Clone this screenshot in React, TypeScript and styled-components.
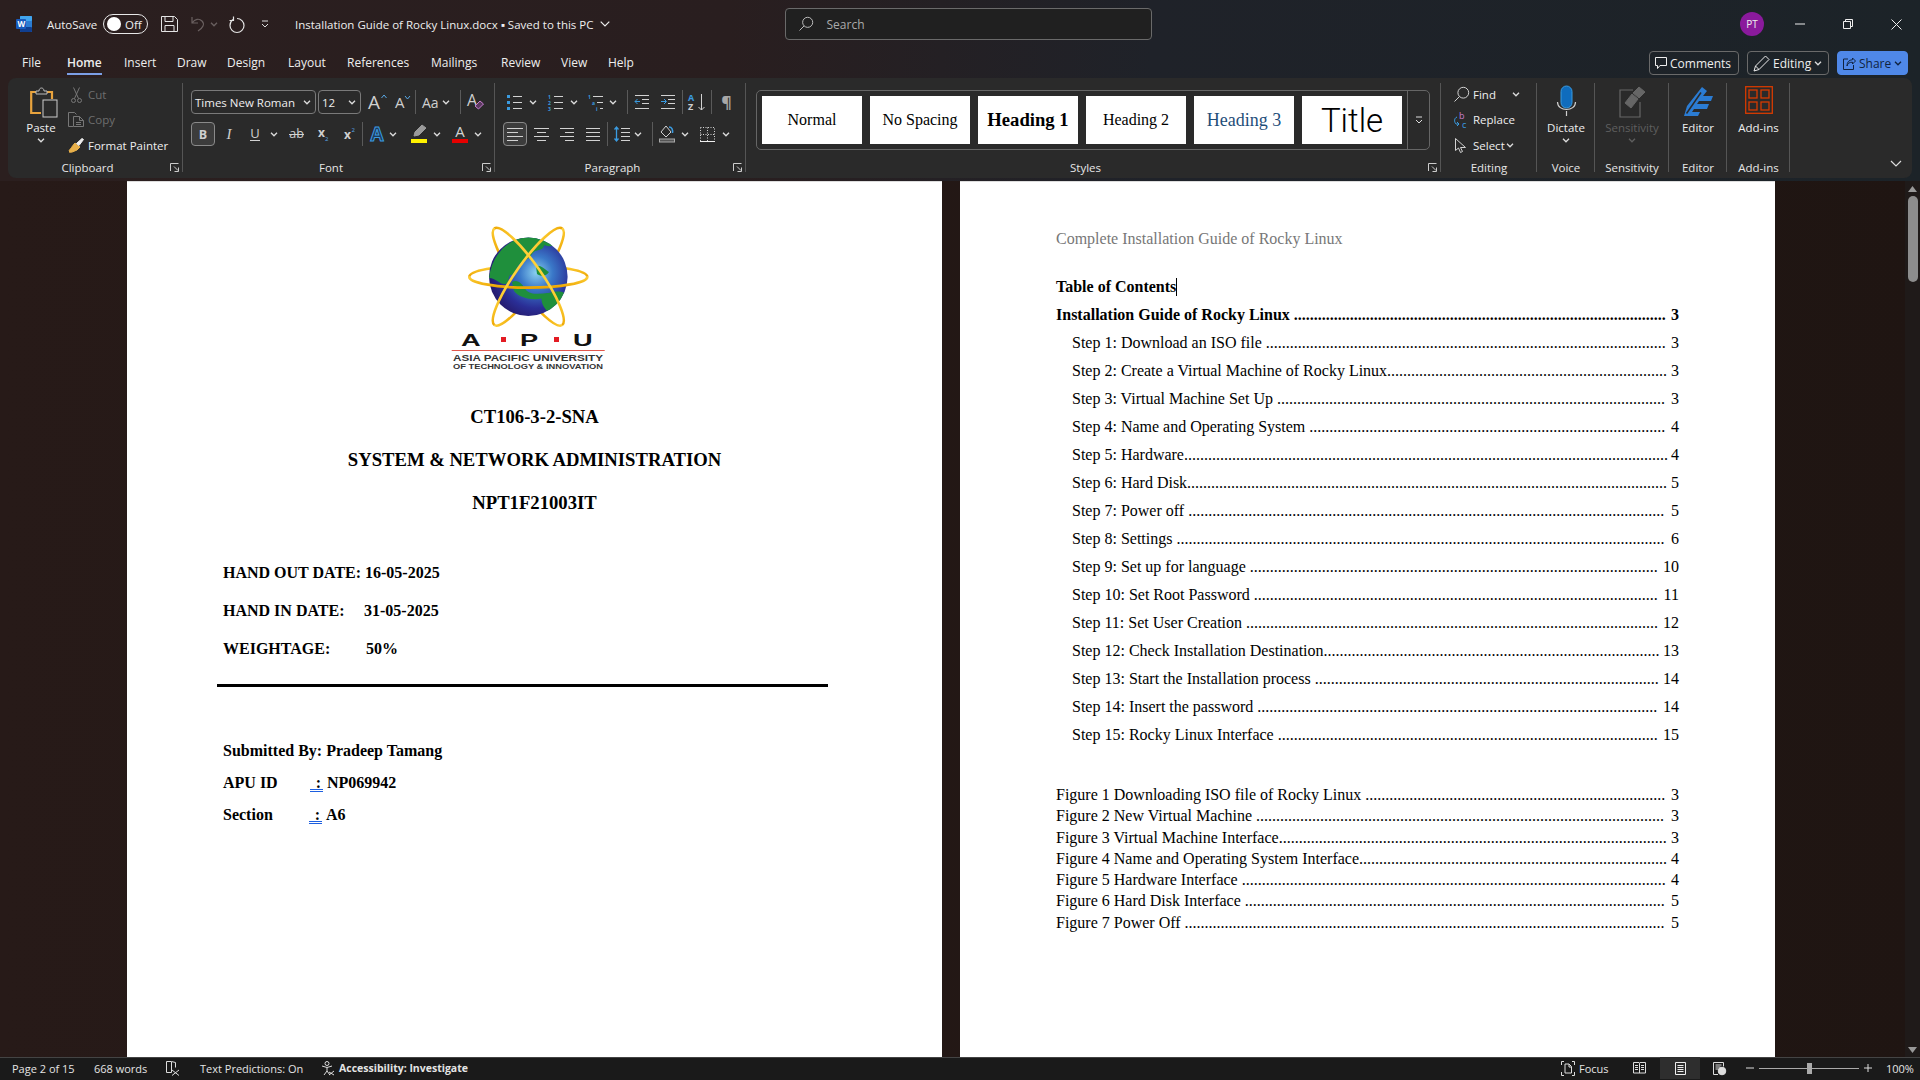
import React, { useLayoutEffect, useRef, useState } from "react";
import styled, { createGlobalStyle } from "styled-components";

const UI = '"Open Sans", "Noto Sans", sans-serif';
const SERIF = '"Liberation Serif", "Times New Roman", serif';

const Global = createGlobalStyle`
  html, body { margin: 0; padding: 0; background: #201513; overflow: hidden; }
  #root { width: 1920px; height: 1080px; }
  * { box-sizing: border-box; }
`;

const Shell = styled.div`
  width: 1920px; height: 1080px; display: flex; flex-direction: column; overflow: hidden;
  font-family: ${UI}; color: #eee; font-size: 11.5px;
  background: #211614;
`;
const Head = styled.header`
  height: 181px; flex-shrink: 0;
  background: linear-gradient(90deg, #2b1f1f 0%, #291e1f 38%, #1f2229 60%, #1c2328 100%);
`;
const TitleBar = styled.div`
  height: 48px; display: grid; grid-template-columns: 784.5px 367px 1fr; align-items: center;
`;
const TitleLeft = styled.div`display: flex; align-items: center; padding-left: 16px;`;
const Cell = styled.span<{ $w: number; $ml?: number; $left?: boolean }>`
  display: flex; align-items: center; justify-content: ${p => (p.$left ? "flex-start" : "center")}; flex-shrink: 0;
  width: ${p => p.$w}px; margin-left: ${p => p.$ml ?? 0}px;
  white-space: nowrap;
`;
const Toggle = styled.span`
  width: 45px; height: 20px; margin-left: 7px; border: 1px solid #e8e8e8; border-radius: 10px;
  display: flex; align-items: center; padding-left: 3px; font-size: 11.5px; gap: 4px; flex-shrink: 0;
`;
const Thumb = styled.i`width: 14px; height: 14px; border-radius: 50%; background: #fff; display: block;`;
const DocName = styled.span`margin-left: 26px; width: 304px; white-space: nowrap; font-size: 11.5px;`;
const SearchBox = styled.div`
  height: 32px; border: 1px solid #6a6a6a; border-radius: 4px; background: #202020;
  display: flex; align-items: center; padding-left: 13px; gap: 14px; color: #aaa; font-size: 12px;
`;
const TitleRight = styled.div`display: flex; justify-content: flex-end; align-items: center;`;
const Avatar = styled.span`
  width: 24px; height: 24px; border-radius: 50%; background: #8a1a9c; color: #eee; font-size: 10px;
  display: flex; align-items: center; justify-content: center; margin-right: 12px;
`;
const WinBtn = styled.span`width: 48px; height: 32px; display: flex; align-items: center; justify-content: center;`;

const TabBar = styled.nav`height: 30px; padding: 3px 12px 0 22px; display: flex; align-items: flex-start;`;
const Tab = styled.span<{ $w: number }>`width: ${p => p.$w}px; height: 24px; flex-shrink: 0; font-size: 12px;`;
const TabText = styled.span<{ $on?: boolean }>`
  display: inline-block; height: 24px; padding-top: 1px; line-height: 22px; white-space: nowrap;
  font-weight: ${p => (p.$on ? 600 : 400)};
  border-bottom: 2px solid ${p => (p.$on ? "#7c9fe6" : "transparent")};
`;
const TabRight = styled.div`margin-left: auto; display: flex; gap: 8px;`;
const TopBtn = styled.span<{ $w: number; $blue?: boolean }>`
  width: ${p => p.$w}px; height: 24px; border-radius: 4px; display: flex; align-items: center; padding-left: 5px; gap: 3px;
  border: 1px solid ${p => (p.$blue ? "#4f88e8" : "#6a6a6a")}; background: ${p => (p.$blue ? "#4f88e8" : "transparent")};
  color: ${p => (p.$blue ? "#10233f" : "#eee")}; font-size: 12px; white-space: nowrap;
`;

const Ribbon = styled.section`
  margin: 0 8px; width: 1904px; height: 100px; background: #2a2a2a; border-radius: 8px; display: flex;
`;
const Group = styled.div<{ $w: number }>`
  position: relative; width: ${p => p.$w}px; height: 100px; flex-shrink: 0; display: flex; flex-direction: column;
  &::after { content: ""; position: absolute; right: 0; top: 5px; bottom: 6px; width: 1px; background: #555; }
`;
const GroupBody = styled.div`height: 80px; display: flex; flex-shrink: 0;`;
const GroupLabel = styled.div<{ $launch?: boolean }>`
  height: 20px; line-height: 20px; text-align: center; font-size: 11.5px; color: #e6e6e6;
  padding-right: ${p => (p.$launch ? 16 : 0)}px; white-space: nowrap;
`;
const Launch = styled.span`position: absolute; right: 4px; bottom: 6px; display: block; line-height: 0;`;
const ToolRows = styled.div`display: flex; flex-direction: column; gap: 8px; padding: 12px 0 0 8px;`;
const ToolRow = styled.div`display: flex; align-items: center; height: 24px;`;
const Divider = styled.span<{ $ml: number }>`width: 1px; height: 24px; background: #5a5a5a; margin-left: ${p => p.$ml}px; flex-shrink: 0;`;
const SelectBox = styled.span<{ $w: number; $ml?: number }>`
  width: ${p => p.$w}px; height: 24px; margin-left: ${p => p.$ml ?? 0}px; border: 1px solid #7a7a7a; border-radius: 4px;
  display: flex; align-items: center; justify-content: space-between; padding: 0 4px 0 3px; font-size: 11.5px; white-space: nowrap; flex-shrink: 0;
`;
const Pressed = styled.span`
  width: 24px; height: 24px; border: 1px solid #8a8a8a; border-radius: 4px; background: #3c3c3c; flex-shrink: 0;
  display: flex; align-items: center; justify-content: center; color: #cfcfcf; font-weight: 700; font-size: 12.5px;
`;
const Big = styled.div<{ $w: number; $c?: string }>`
  width: ${p => p.$w}px; flex-shrink: 0; padding-top: 8px; display: flex; flex-direction: column; align-items: center;
  color: ${p => p.$c ?? "#eee"}; font-size: 11.5px;
`;
const BigIcon = styled.div<{ $shift?: number }>`
  height: 32px; display: flex; align-items: flex-start; justify-content: center; margin-left: ${p => p.$shift ?? 0}px;
`;
const BigText = styled.div`height: 20px; line-height: 20px; white-space: nowrap;`;
const ActionCol = styled.div<{ $ml?: number }>`display: flex; flex-direction: column; padding-top: 4px; margin-left: ${p => p.$ml ?? 0}px;`;
const ActionRow = styled.div<{ $off?: boolean }>`
  display: flex; align-items: center; height: 26px; color: ${p => (p.$off ? "#6e6e6e" : "#eee")}; font-size: 11.5px; white-space: nowrap;
`;
const Gallery = styled.div`
  margin: 12px 0 0 10px; width: 674px; height: 60px; border: 1px solid #666; border-radius: 5px; display: flex; padding-left: 5px; align-items: center;
`;
const StyleCard = styled.div<{ $size: number; $bold?: boolean; $c?: string; $sans?: boolean }>`
  width: 100px; height: 48px; margin-right: 8px; background: #fff; display: flex; align-items: center; justify-content: center; flex-shrink: 0;
  font-family: ${p => (p.$sans ? '"Roboto", sans-serif' : SERIF)}; font-weight: ${p => (p.$bold ? 700 : p.$sans ? 300 : 400)};
  font-size: ${p => p.$size}px; color: ${p => p.$c ?? "#000"}; white-space: nowrap;
`;
const GalleryMore = styled.div`
  margin-left: -3px; flex: 1; height: 58px; border-left: 1px solid #666; display: flex; align-items: center; justify-content: center;
`;
const Collapse = styled.span`margin-left: auto; margin-right: 10px; align-self: flex-end; margin-bottom: 11px; line-height: 0;`;

const Doc = styled.main`flex: 1; min-height: 0; display: flex; padding-left: 127px; background: linear-gradient(90deg, #271a18, #1f1512);`;
const PageOne = styled.article`
  width: 815px; height: 100%; background: #fff; color: #000; flex-shrink: 0; padding-top: 26px;
  font-family: ${SERIF}; border-top: 1px solid #ddd;
`;
const PageTwo = styled(PageOne)`margin-left: 18px; padding: 43px 96px 0;`;
const LogoWrap = styled.div`margin-left: 313px; height: 170px; line-height: 0;`;
const CenterTitle = styled.div`height: 43px; line-height: 43px; text-align: center; font-weight: 700; font-size: 18.67px;`;
const TitleBlock = styled.div`margin-top: 17px;`;
const InfoBlock = styled.div`margin-top: 30px; padding-left: 96px;`;
const InfoLine = styled.div`height: 38px; line-height: 38px; font-weight: 700; font-size: 16px; display: flex;`;
const InfoKey = styled.span<{ $w: number }>`width: ${p => p.$w}px; white-space: nowrap;`;
const Rule = styled.div`margin: 16px 0 0 90px; width: 611px; height: 3px; background: #000;`;
const SubBlock = styled.div`margin-top: 48px; padding-left: 96px;`;
const SubLine = styled.div`height: 32px; line-height: 32px; font-weight: 700; font-size: 16px; display: flex;`;
const SubKey = styled.span<{ $w: number }>`width: ${p => p.$w}px; white-space: nowrap;`;
const Colon = styled.span`
  display: inline-block; width: 13px; height: 20px; line-height: 22px; margin: 5px 4px 0 0; text-align: right; padding-right: 2px;
  border-bottom: 3px double #1d5fe0;
`;
const Running = styled.div`height: 28px; line-height: 28px; font-size: 16px; color: #777;`;
const TocHead = styled.div`margin-top: 20px; height: 28px; line-height: 28px; font-size: 16px; font-weight: 700;`;
const Caret = styled.span`display: inline-block; width: 1px; height: 18px; background: #000; vertical-align: -4px;`;
const TocRow = styled.div<{ $h: number; $indent?: boolean; $bold?: boolean }>`
  display: flex; height: ${p => p.$h}px; line-height: ${p => p.$h}px; font-size: 16px; width: 623px;
  padding-left: ${p => (p.$indent ? 16 : 0)}px; font-weight: ${p => (p.$bold ? 700 : 400)};
`;
const TocTitle = styled.span`white-space: pre; flex-shrink: 0;`;
const Leader = styled.span`flex: 1; white-space: nowrap; min-width: 0; margin-right: 3px;`;
const FigBlock = styled.div`margin-top: 35px;`;
const ScrollCol = styled.aside`
  margin-left: auto; width: 15px; display: flex; flex-direction: column; align-items: center; background: #1f1a19;
`;
const ScrollArrow = styled.span`height: 15px; display: flex; align-items: center; justify-content: center;`;
const ScrollTrack = styled.div`flex: 1;`;
const ScrollThumb = styled.div`width: 10px; height: 86px; background: #8d8d8d; border-radius: 5px;`;

const Status = styled.footer`
  height: 23px; flex-shrink: 0; background: #1a1a1a; border-top: 1px solid #444; display: flex; align-items: center;
  padding: 0 0 2px 12px; font-size: 11px; color: #e4e4e4;
`;
const StatusBold = styled.b`font-size: 10.5px; font-weight: 700;`;
const StatusRight = styled.div`margin-left: auto; padding-right: 8px; display: flex; align-items: center; height: 22px;`;
const ViewActive = styled.span`width: 40px; height: 22px; margin-left: 14px; background: #2e2e2e; display: flex; align-items: center; justify-content: center;`;
const Slider = styled.span`width: 100px; height: 12px; margin-left: 5px; position: relative; display: block;
  &::before { content: ""; position: absolute; left: 0; right: 0; top: 5.5px; height: 1px; background: #aaa; }
`;
const SliderThumb = styled.i`position: absolute; left: 48px; top: 1px; width: 5px; height: 11px; background: #aaa; display: block;`;

const IconSvg = styled.svg`display: block; flex-shrink: 0; overflow: visible;`;
type SP = { w: number; h: number; children: React.ReactNode; c?: string; sw?: number };
const S = ({ w, h, children, c = "#d2d2d2", sw = 1 }: SP) => (
  <IconSvg width={w} height={h} viewBox={`0 0 ${w} ${h}`} fill="none" stroke={c} strokeWidth={sw}>{children}</IconSvg>
);
const Chev = ({ c = "#ddd" }: { c?: string }) => <S w={8} h={5} c={c} sw={1.3}><path d="M1 .8l3 3 3-3" /></S>;
const LaunchIcon = () => <S w={9} h={9} c="#ccc"><path d="M.5 8V.5H8.5M4 3.500l4 4M8.500 4.500v4h-4" /></S>;
const T = (p: React.SVGProps<SVGTextElement>) => <text stroke="none" fontFamily={UI} {...p} />;
const Lines = ({ w, h, rows, c }: { w: number; h: number; rows: [number, number, number][]; c?: string }) => (
  <S w={w} h={h} c={c}>{rows.map(([x1, x2, y], i) => <path key={i} d={`M${x1} ${y + .5}H${x2}`} />)}</S>
);

const WordIcon = () => (
  <S w={16} h={16} c="none">
    <rect x="4" y="0" width="12" height="16" rx="1" fill="#2b7cd3" />
    <rect x="4" y="0" width="12" height="5" rx="1" fill="#41a5ee" />
    <rect x="4" y="11" width="12" height="5" rx="1" fill="#103f91" />
    <rect x="0" y="3" width="10" height="10" rx="1" fill="#185abd" />
    <T x="1.500" y="11" fontSize="8" fontWeight="700" fill="#fff">W</T>
  </S>
);
const SaveIcon = () => <S w={17} h={16} c="#e4e4e4"><path d="M.5.5h13l3 3v12H.5zM4 .5v5h8v-5M4 15.500v-6h9v6" /></S>;
const UndoIcon = () => <S w={14} h={16} c="#6a6060" sw={1.2}><path d="M1 1v6h6M1 7c3-4 7-5 10-2 3 3 1 7-4 10" /></S>;
const RedoIcon = () => <S w={16} h={17} c="#e4e4e4" sw={1.2}><path d="M8 2.500a7 7 0 1 1-7 7c0-3 1.500-5 3-6M4.500 .5v4h-4" /></S>;
const QatIcon = () => <S w={8} h={8} c="#ddd"><path d="M1 1h6M1 4l3 3 3-3" /></S>;
const SearchIcon = ({ c = "#bbb", w = 14 }: { c?: string; w?: number }) => (
  <S w={w} h={w} c={c}><circle cx={w * .62} cy={w * .38} r={w * .36} /><path d={`M${w * .36} ${w * .64}L.5 ${w - .5}`} /></S>
);
const CommentIcon = () => <S w={12} h={12} c="#eee"><path d="M.5.5h11v8H5l-2.500 3V8.500H.5z" /></S>;
const PenIcon = ({ c = "#eee" }: { c?: string }) => <S w={17} h={17} c={c}><path d="M1 16l1.500-5L12.500 1l3.500 3.500-10 10zM2.500 11l3.500 3.500" /></S>;
const ShareIcon = () => <S w={13} h={13} c="#10233f"><path d="M9.500 1l3 3-3 3V5.200C6 5 4.500 7 4 9c0-4 2-6 5.500-6.300zM5 2H.5v10.500h10V8" /></S>;

const PasteIcon = () => (
  <S w={27} h={31}>
    <path d="M6 6H1.200v21H11" stroke="#e8a33d" strokeWidth="2.200" />
    <path d="M17 6h5v7" stroke="#e8a33d" strokeWidth="2.200" />
    <path d="M6 8V5h3c0-4 5-4 5 0h3v3z" stroke="#bbb" />
    <rect x="13" y="14" width="14" height="17" fill="#2a2a2a" stroke="#ccc" />
  </S>
);
const CutIcon = () => <S w={11} h={16} c="#777"><circle cx="2.500" cy="13.500" r="2" /><circle cx="8.500" cy="13.500" r="2" /><path d="M3.500 11.500L8.500.5M7.500 11.500L2.500.5" /></S>;
const CopyIcon = () => <S w={16} h={15} c="#777"><path d="M5 14.500H.5V.5h6l2 2M5.500 4.500h6l4 4v6h-10zM11.500 4.500v4h4M8 10.500h5M8 12.500h5" /></S>;
const PainterIcon = () => (
  <S w={16} h={15}>
    <path d="M7 5l5 4-3 3c-3 1-5 3-8 2l2-2-2 .5C3 11 4 8 7 5z" fill="#e8b04a" stroke="#e8b04a" />
    <path d="M8.500 5.500L14 .5 15.500 1.500 11 7.500z" fill="#eee" stroke="#eee" />
  </S>
);
const GrowIcon = () => <S w={20} h={24}><T x="0" y="19" fontSize="19" fill="#cfcfcf">A</T><path d="M13.500 8l2.500-3 2.500 3" stroke="#5aa9e6" /></S>;
const ShrinkIcon = () => <S w={15} h={24}><T x="0" y="18" fontSize="15" fill="#cfcfcf">A</T><path d="M10 6l2.500 3 2.500-3" stroke="#5aa9e6" /></S>;
const AaIcon = () => <S w={17} h={24}><T x="0" y="17.500" fontSize="14" fill="#cfcfcf">Aa</T></S>;
const ClearIcon = () => (
  <S w={17} h={20}>
    <T x="0" y="14" fontSize="16" fill="#cfcfcf">A</T>
    <path d="M8 14l5-5 3.500 3-5 5z" stroke="#c77dd1" fill="#5b3a60" />
  </S>
);
const Letter = ({ t, st, w = 12 }: { t: string; st?: React.SVGProps<SVGTextElement>; w?: number }) => (
  <S w={w} h={18}><T x={w / 2} y="14" textAnchor="middle" fontSize="13" fill="#cfcfcf" {...st}>{t}</T></S>
);
const UnderlineIcon = () => <S w={10} h={18}><T x="5" y="13" textAnchor="middle" fontSize="13" fill="#cfcfcf">U</T><path d="M0 15.500h10" /></S>;
const StrikeIcon = () => <S w={15} h={18}><T x="7.500" y="13" textAnchor="middle" fontSize="12.500" fill="#cfcfcf">ab</T><path d="M0 9.500h15" /></S>;
const SubIcon = () => <S w={10} h={18}><T x="0" y="12" fontSize="12" fontWeight="700" fill="#cfcfcf">x</T><T x="7" y="16" fontSize="6" fill="#5aa9e6">2</T></S>;
const SupIcon = () => <S w={11} h={18}><T x="0" y="14" fontSize="12" fontWeight="700" fill="#cfcfcf">x</T><T x="7.500" y="7" fontSize="6" fill="#5aa9e6">2</T></S>;
const EffectA = () => <S w={16} h={18}><T x="8" y="15.500" textAnchor="middle" fontSize="19" fontWeight="700" fill="#1d3a5c" stroke="#3a9be0" strokeWidth="1">A</T></S>;
const HighIcon = () => (
  <S w={16} h={20}>
    <path d="M3 12l1-4 7-7 4 3-7 7z" fill="#9a9a9a" stroke="#9a9a9a" />
    <rect x="0" y="15" width="16" height="4" fill="#fff200" stroke="none" />
  </S>
);
const FontColor = () => (
  <S w={16} h={20}>
    <T x="8" y="13" textAnchor="middle" fontSize="15" fill="#d2d2d2">A</T>
    <rect x="0" y="15" width="16" height="4" fill="#e60000" stroke="none" />
  </S>
);
const BulletIcon = () => (
  <S w={15} h={16}>
    <path d="M6 2.500h9M6 8.500h9M6 14.500h9" />
    <rect x="0" y="1" width="3" height="3" fill="#3a9be0" stroke="none" /><rect x="0" y="7" width="3" height="3" fill="#3a9be0" stroke="none" /><rect x="0" y="13" width="3" height="3" fill="#3a9be0" stroke="none" />
  </S>
);
const NumberIcon = () => (
  <S w={15} h={16}>
    <path d="M6 2.500h9M6 8.500h9M6 14.500h9" />
    <T x="0" y="4.500" fontSize="5" fontWeight="700" fill="#3a9be0">1</T><T x="0" y="10.500" fontSize="5" fontWeight="700" fill="#3a9be0">2</T><T x="0" y="16.500" fontSize="5" fontWeight="700" fill="#3a9be0">3</T>
  </S>
);
const MultiIcon = () => (
  <S w={16} h={16}>
    <path d="M5 2.500h10M9 8.500h6M12 14.500h3" />
    <T x="0" y="5" fontSize="5" fontWeight="700" fill="#3a9be0">1</T><T x="4" y="11" fontSize="5" fontWeight="700" fill="#3a9be0">a</T><T x="8" y="16.500" fontSize="5" fontWeight="700" fill="#3a9be0">i</T>
  </S>
);
const IndentIcon = ({ flip }: { flip?: boolean }) => (
  <S w={14} h={14}>
    <path d="M0 .5h14M7 4.500h7M7 8.500h7M0 13.500h14" />
    {flip
      ? <path d="M5 6.500H0M2.500 4L0 6.500 2.500 9" stroke="#3a9be0" />
      : <path d="M0 6.500h5M3 4l2.500 2.500L3 9" stroke="#3a9be0" />}
  </S>
);
const SortIcon = () => (
  <S w={18} h={18}>
    <T x="0" y="8" fontSize="9" fontWeight="700" fill="#3a9be0">A</T>
    <T x="0" y="17" fontSize="9" fontWeight="700" fill="#cfcfcf">Z</T>
    <path d="M13.500 1v16M10.500 14l3 3 3-3" />
  </S>
);
const Pilcrow = () => <S w={11} h={18}><T x="5.500" y="15" textAnchor="middle" fontSize="16" fontWeight="700" fill="#a8a8a8">¶</T></S>;
const SpacingIcon = () => (
  <S w={16} h={16}>
    <path d="M7 2.500h9M7 6.500h9M7 10.500h9M7 14.500h9" />
    <path d="M2.500 1v14M.5 3.500l2-2.500 2 2.500M.5 12.500l2 2.500 2-2.500" stroke="#3a9be0" strokeWidth="1.300" />
  </S>
);
const ShadeIcon = () => (
  <S w={16} h={18}>
    <path d="M7 1l-5 6 5 5 5-5z" />
    <path d="M10 2c3 0 4 3 3.500 6" stroke="#3a9be0" strokeWidth="1.500" />
    <rect x=".5" y="14" width="15" height="3" fill="#555" stroke="#aaa" />
  </S>
);
const BorderIcon = () => (
  <S w={15} h={15}>
    <path d="M.5.500h14v14M.5.500v14M7.500.500v14M.5 7.500h14" strokeDasharray="1 1.500" />
    <path d="M0 14.500h15" stroke="#eee" />
  </S>
);
const ReplaceIcon = () => (
  <S w={15} h={16}>
    <path d="M4 5C1 6 1 10 3 12h3M4 14l2-2-2-2" stroke="#3a9be0" />
    <T x="6" y="7" fontSize="9" fill="#c77dd1">b</T>
    <T x="9" y="15.500" fontSize="9" fill="#3a9be0">c</T>
  </S>
);
const SelectIcon = () => <S w={12} h={15}><path d="M.5.500v12l3-2.500 2 4.500 2-1-2-4h5z" /></S>;
const MicIcon = () => (
  <S w={20} h={30} c="#cfcfcf">
    <rect x="5" y="0" width="11" height="22" rx="5.500" fill="#0f6cbd" stroke="#3a9be0" />
    <path d="M1.500 16c0 10 18 10 18 0M10.500 25v5" strokeWidth="1.200" />
  </S>
);
const SensIcon = () => (
  <S w={27} h={30} c="#666">
    <path d="M14 4H1v27h20V16" strokeWidth="1.200" />
    <path d="M6 17l7-9 6 5-7 9z" fill="#666" />
    <path d="M14 7l6-6 6 5-6 6z" fill="#666" />
  </S>
);
const EditorIcon = () => (
  <S w={31} h={31} c="#2b7cd3">
    <path d="M1 30l3-10L19 1l5 4-4 5h10l-2 5H16l-2 3h12l-2 5H11l-2 3h8l-2 4H6z" fill="#2b7cd3" stroke="none" />
    <path d="M3.500 27.500L18 6.500" stroke="#2a2a2a" strokeWidth="1.500" />
  </S>
);
const AddinsIcon = () => (
  <S w={28} h={28} c="#d83b01" sw={1.300}>
    <rect x=".7" y=".7" width="26.600" height="26.600" />
    <rect x="4" y="4" width="8" height="8" /><rect x="16" y="4" width="8" height="8" />
    <rect x="4" y="16" width="8" height="8" /><rect x="16" y="16" width="8" height="8" />
  </S>
);

const Ring = ({ r, front }: { r: number; front?: boolean }) => {
  const d = front ? "M-59 0A59 13 0 0 1 59 0" : "M-59 0A59 13 0 1 0 59 0";
  return <path d={d} transform={`translate(88.300 68.700) rotate(${r})`} stroke="url(#gold)" strokeWidth="2.600" fill="none" />;
};
const Logo = () => (
  <IconSvg width={180} height={170} viewBox="0 0 180 170">
    <defs>
      <radialGradient id="glb" cx="60%" cy="45%" r="60%">
        <stop offset="0" stopColor="#8ad0f0" /><stop offset=".35" stopColor="#3a78c8" /><stop offset=".75" stopColor="#2a2e96" /><stop offset="1" stopColor="#261c70" />
      </radialGradient>
      <linearGradient id="gold" x1="0" y1="0" x2="0" y2="1"><stop offset="0" stopColor="#ffd23a" /><stop offset="1" stopColor="#eda500" /></linearGradient>
      <clipPath id="gc"><circle cx="88.300" cy="68.700" r="39.300" /></clipPath>
    </defs>
    <path d="M29.300 68.700A59 11 0 0 1 147.300 68.700" stroke="url(#gold)" strokeWidth="2.600" fill="none" />
    <Ring r={55} /><Ring r={-55} />
    <circle cx="88.300" cy="68.700" r="39.300" fill="url(#glb)" />
    <g clipPath="url(#gc)" fill="#1f8f3c">
      <path d="M49 70C52 45 70 28 92 29c8 1 14 5 12 9-2 6-8 2-12 8-4 7-10 6-14 12-3 4-1 9-8 9-3 4 0 10-6 9-5 0-8-6-15-6z" />
      <path d="M72 74c6-3 10 2 14 8 4 5 14 4 22 3 2 3-4 6-10 6-8 1-20-2-24-8z" />
      <path d="M102 88c6-4 18-6 22-3-2 10-8 18-14 20-6-3-10-12-8-17z" />
      <path d="M96 58c5-1 8 3 13 6-2 4-8 5-12 2z" />
      <path d="M100 33c6-2 12 0 14 4-4 2-10 2-14-4z" />
    </g>
    <path d="M29.300 68.700A59 11 0 0 0 147.300 68.700" stroke="url(#gold)" strokeWidth="2.800" fill="none" />
    <Ring r={55} front /><Ring r={-55} front />
    <g stroke="none" fontFamily={'"Liberation Sans", sans-serif'} fontWeight="700" fontSize="16.500" fill="#111">
      <text transform="translate(21 138) scale(1.650 1)">A</text>
      <text transform="translate(80 138) scale(1.650 1)">P</text>
      <text transform="translate(133 138) scale(1.650 1)">U</text>
    </g>
    <rect x="61" y="129" width="5" height="5" fill="#e31b23" /><rect x="114" y="129" width="5" height="5" fill="#e31b23" />
    <rect x="11.700" y="142" width="153" height="1" fill="#e2574c" />
    <text x="13" y="153" fontFamily={'"Liberation Sans", sans-serif'} fontWeight="700" fontSize="8.600" textLength="150" lengthAdjust="spacingAndGlyphs" fill="#333">ASIA PACIFIC UNIVERSITY</text>
    <text x="13" y="160.500" fontFamily={'"Liberation Sans", sans-serif'} fontWeight="700" fontSize="6.500" textLength="150" lengthAdjust="spacingAndGlyphs" fill="#333">OF TECHNOLOGY &amp; INNOVATION</text>
  </IconSvg>
);

const TABS: [string, number][] = [["File", 45], ["Home", 57], ["Insert", 53], ["Draw", 50], ["Design", 61], ["Layout", 59], ["References", 84], ["Mailings", 70], ["Review", 60], ["View", 47], ["Help", 40]];
const STEPS: [string, string][] = [
  ["Step 1: Download an ISO file ", "3"], ["Step 2: Create a Virtual Machine of Rocky Linux", "3"], ["Step 3: Virtual Machine Set Up ", "3"],
  ["Step 4: Name and Operating System ", "4"], ["Step 5: Hardware", "4"], ["Step 6: Hard Disk", "5"], ["Step 7: Power off ", "5"], ["Step 8: Settings ", "6"],
  ["Step 9: Set up for language ", "10"], ["Step 10: Set Root Password ", "11"], ["Step 11: Set User Creation ", "12"], ["Step 12: Check Installation Destination", "13"],
  ["Step 13: Start the Installation process ", "14"], ["Step 14: Insert the password ", "14"], ["Step 15: Rocky Linux Interface ", "15"],
];
const FIGS: [string, string][] = [
  ["Figure 1 Downloading ISO file of Rocky Linux ", "3"], ["Figure 2 New Virtual Machine ", "3"], ["Figure 3 Virtual Machine Interface", "3"],
  ["Figure 4 Name and Operating System Interface", "4"], ["Figure 5 Hardware Interface ", "4"], ["Figure 6 Hard Disk Interface ", "5"], ["Figure 7 Power Off ", "5"],
];
// A dot of the 16px serif is 4px wide: fill the leader with as many as fit.
const Toc = ({ t, n, h, indent, bold }: { t: string; n: string; h: number; indent?: boolean; bold?: boolean }) => {
  const ref = useRef<HTMLSpanElement>(null);
  const [dots, setDots] = useState(0);
  useLayoutEffect(() => {
    if (ref.current) setDots(Math.floor(ref.current.getBoundingClientRect().width / 4));
  }, []);
  return (
    <TocRow $h={h} $indent={indent} $bold={bold}>
      <TocTitle>{t}</TocTitle><Leader ref={ref}>{".".repeat(dots)}</Leader><span>{n}</span>
    </TocRow>
  );
};
const ALIGN = {
  left: [[0, 16, 1], [0, 11, 5], [0, 16, 9], [0, 11, 13]],
  center: [[0, 15, 1], [3, 12, 5], [0, 15, 9], [3, 12, 13]],
  right: [[0, 14, 1], [5, 14, 5], [0, 14, 9], [5, 14, 13]],
  just: [[0, 14, 1], [0, 14, 5], [0, 14, 9], [0, 14, 13]],
} as Record<string, [number, number, number][]>;

export default function App() {
  return (
    <Shell>
      <Global />
      <Head>
        <TitleBar>
          <TitleLeft>
            <WordIcon />
            <Cell $w={48} $ml={16}>AutoSave</Cell>
            <Toggle><Thumb />Off</Toggle>
            <Cell $w={17} $ml={13}><SaveIcon /></Cell>
            <Cell $w={14} $ml={13}><UndoIcon /></Cell>
            <Cell $w={8} $ml={5}><Chev c="#6a6060" /></Cell>
            <Cell $w={16} $ml={11}><RedoIcon /></Cell>
            <Cell $w={8} $ml={16}><QatIcon /></Cell>
            <DocName>Installation Guide of Rocky Linux.docx ▪ Saved to this PC</DocName>
            <Cell $w={10} $ml={1}><S w={10} h={6} c="#eee" sw={1.200}><path d="M.7.7L5 5 9.300.7" /></S></Cell>
          </TitleLeft>
          <SearchBox><SearchIcon />Search</SearchBox>
          <TitleRight>
            <Avatar>PT</Avatar>
            <WinBtn><S w={10} h={2} c="#eee"><path d="M0 1h10" /></S></WinBtn>
            <WinBtn><S w={10} h={10} c="#eee"><path d="M2.500 2V.5h7v7H8M.5 2.500h7v7h-7z" /></S></WinBtn>
            <WinBtn><S w={11} h={11} c="#eee"><path d="M.5.5l10 10M10.500.5l-10 10" /></S></WinBtn>
          </TitleRight>
        </TitleBar>
        <TabBar>
          {TABS.map(([t, w]) => <Tab key={t} $w={w}><TabText $on={t === "Home"}>{t}</TabText></Tab>)}
          <TabRight>
            <TopBtn $w={90}><CommentIcon />Comments</TopBtn>
            <TopBtn $w={82}><PenIcon />Editing<Chev /></TopBtn>
            <TopBtn $w={71} $blue><ShareIcon />Share<Chev c="#10233f" /></TopBtn>
          </TabRight>
        </TabBar>
        <Ribbon>
          <Group $w={175}>
            <GroupBody>
              <Big $w={66}>
                <BigIcon $shift={5}><PasteIcon /></BigIcon>
                <BigText>Paste</BigText>
                <Chev />
              </Big>
              <ActionCol $ml={-6}>
                <ActionRow $off><Cell $w={16}><CutIcon /></Cell><Cell $left $w={30} $ml={4}>Cut</Cell></ActionRow>
                <ActionRow $off><Cell $w={16}><CopyIcon /></Cell><Cell $left $w={32} $ml={4}>Copy</Cell></ActionRow>
                <ActionRow><Cell $w={16}><PainterIcon /></Cell><Cell $left $w={78} $ml={4}>Format Painter</Cell></ActionRow>
              </ActionCol>
            </GroupBody>
            <GroupLabel $launch>Clipboard</GroupLabel>
            <Launch><LaunchIcon /></Launch>
          </Group>
          <Group $w={312}>
            <GroupBody>
              <ToolRows>
                <ToolRow>
                  <SelectBox $w={125}>Times New Roman<Chev /></SelectBox>
                  <SelectBox $w={43} $ml={2}>12<Chev /></SelectBox>
                  <Cell $w={20} $ml={7}><GrowIcon /></Cell>
                  <Cell $w={15} $ml={7}><ShrinkIcon /></Cell>
                  <Divider $ml={5} />
                  <Cell $w={16} $ml={6}><AaIcon /></Cell>
                  <Cell $w={8} $ml={4}><Chev /></Cell>
                  <Divider $ml={10} />
                  <Cell $w={16} $ml={6}><ClearIcon /></Cell>
                </ToolRow>
                <ToolRow>
                  <Pressed>B</Pressed>
                  <Cell $w={10} $ml={9}><Letter t="I" w={10} st={{ fontStyle: "italic", fontFamily: SERIF, fontSize: 15 }} /></Cell>
                  <Cell $w={10} $ml={16}><UnderlineIcon /></Cell>
                  <Cell $w={8} $ml={10}><Chev /></Cell>
                  <Cell $w={15} $ml={11}><StrikeIcon /></Cell>
                  <Cell $w={10} $ml={14}><SubIcon /></Cell>
                  <Cell $w={11} $ml={16}><SupIcon /></Cell>
                  <Divider $ml={7} />
                  <Cell $w={16} $ml={6}><EffectA /></Cell>
                  <Cell $w={8} $ml={4}><Chev /></Cell>
                  <Cell $w={16} $ml={14}><HighIcon /></Cell>
                  <Cell $w={8} $ml={6}><Chev /></Cell>
                  <Cell $w={16} $ml={11}><FontColor /></Cell>
                  <Cell $w={8} $ml={6}><Chev /></Cell>
                </ToolRow>
              </ToolRows>
            </GroupBody>
            <GroupLabel $launch>Font</GroupLabel>
            <Launch><LaunchIcon /></Launch>
          </Group>
          <Group $w={251}>
            <GroupBody>
              <ToolRows>
                <ToolRow>
                  <Cell $w={15} $ml={4}><BulletIcon /></Cell>
                  <Cell $w={8} $ml={7}><Chev /></Cell>
                  <Cell $w={15} $ml={11}><NumberIcon /></Cell>
                  <Cell $w={8} $ml={7}><Chev /></Cell>
                  <Cell $w={16} $ml={10}><MultiIcon /></Cell>
                  <Cell $w={8} $ml={5}><Chev /></Cell>
                  <Divider $ml={10} />
                  <Cell $w={14} $ml={7}><IndentIcon flip /></Cell>
                  <Cell $w={14} $ml={12}><IndentIcon /></Cell>
                  <Divider $ml={7} />
                  <Cell $w={18} $ml={5}><SortIcon /></Cell>
                  <Divider $ml={5} />
                  <Cell $w={11} $ml={9}><Pilcrow /></Cell>
                </ToolRow>
                <ToolRow>
                  <Pressed><Lines w={16} h={14} rows={ALIGN.left} /></Pressed>
                  <Cell $w={15} $ml={7}><Lines w={15} h={14} rows={ALIGN.center} /></Cell>
                  <Cell $w={14} $ml={11}><Lines w={14} h={14} rows={ALIGN.right} /></Cell>
                  <Cell $w={14} $ml={12}><Lines w={14} h={14} rows={ALIGN.just} /></Cell>
                  <Divider $ml={7} />
                  <Cell $w={16} $ml={6}><SpacingIcon /></Cell>
                  <Cell $w={8} $ml={4}><Chev /></Cell>
                  <Divider $ml={10} />
                  <Cell $w={16} $ml={6}><ShadeIcon /></Cell>
                  <Cell $w={8} $ml={6}><Chev /></Cell>
                  <Cell $w={15} $ml={11}><BorderIcon /></Cell>
                  <Cell $w={8} $ml={7}><Chev /></Cell>
                </ToolRow>
              </ToolRows>
            </GroupBody>
            <GroupLabel $launch>Paragraph</GroupLabel>
            <Launch><LaunchIcon /></Launch>
          </Group>
          <Group $w={695}>
            <GroupBody>
              <Gallery>
                <StyleCard $size={16}>Normal</StyleCard>
                <StyleCard $size={16}>No Spacing</StyleCard>
                <StyleCard $size={18.67} $bold>Heading 1</StyleCard>
                <StyleCard $size={16}>Heading 2</StyleCard>
                <StyleCard $size={18} $c="#1f4e79">Heading 3</StyleCard>
                <StyleCard $size={33} $sans>Title</StyleCard>
                <GalleryMore><QatIcon /></GalleryMore>
              </Gallery>
            </GroupBody>
            <GroupLabel $launch>Styles</GroupLabel>
            <Launch><LaunchIcon /></Launch>
          </Group>
          <Group $w={96}>
            <GroupBody>
              <ActionCol>
                <ActionRow><Cell $w={15} $ml={13}><SearchIcon c="#d2d2d2" w={15} /></Cell><Cell $left $w={28} $ml={4}>Find</Cell><Cell $w={8} $ml={11}><Chev /></Cell></ActionRow>
                <ActionRow><Cell $w={15} $ml={12}><ReplaceIcon /></Cell><Cell $left $w={44} $ml={5}>Replace</Cell></ActionRow>
                <ActionRow><Cell $w={12} $ml={14}><SelectIcon /></Cell><Cell $left $w={33} $ml={6}>Select</Cell><Cell $w={8}><Chev /></Cell></ActionRow>
              </ActionCol>
            </GroupBody>
            <GroupLabel>Editing</GroupLabel>
          </Group>
          <Group $w={58}>
            <GroupBody>
              <Big $w={58}><BigIcon><MicIcon /></BigIcon><BigText>Dictate</BigText><Chev /></Big>
            </GroupBody>
            <GroupLabel>Voice</GroupLabel>
          </Group>
          <Group $w={74}>
            <GroupBody>
              <Big $w={74} $c="#5f5f5f"><BigIcon><SensIcon /></BigIcon><BigText>Sensitivity</BigText><Chev c="#5f5f5f" /></Big>
            </GroupBody>
            <GroupLabel>Sensitivity</GroupLabel>
          </Group>
          <Group $w={58}>
            <GroupBody>
              <Big $w={58}><BigIcon><EditorIcon /></BigIcon><BigText>Editor</BigText></Big>
            </GroupBody>
            <GroupLabel>Editor</GroupLabel>
          </Group>
          <Group $w={63}>
            <GroupBody>
              <Big $w={63}><BigIcon><AddinsIcon /></BigIcon><BigText>Add-ins</BigText></Big>
            </GroupBody>
            <GroupLabel>Add-ins</GroupLabel>
          </Group>
          <Collapse><S w={12} h={7} c="#ddd" sw={1.200}><path d="M1 1l5 5 5-5" /></S></Collapse>
        </Ribbon>
      </Head>
      <Doc>
        <PageOne>
          <LogoWrap><Logo /></LogoWrap>
          <TitleBlock>
            <CenterTitle>CT106-3-2-SNA</CenterTitle>
            <CenterTitle>SYSTEM &amp; NETWORK ADMINISTRATION</CenterTitle>
            <CenterTitle>NPT1F21003IT</CenterTitle>
          </TitleBlock>
          <InfoBlock>
            <InfoLine><InfoKey $w={142}>HAND OUT DATE:</InfoKey>16-05-2025</InfoLine>
            <InfoLine><InfoKey $w={141}>HAND IN DATE:</InfoKey>31-05-2025</InfoLine>
            <InfoLine><InfoKey $w={143}>WEIGHTAGE:</InfoKey>50%</InfoLine>
          </InfoBlock>
          <Rule />
          <SubBlock>
            <SubLine>Submitted By: Pradeep Tamang</SubLine>
            <SubLine><SubKey $w={87}>APU ID</SubKey><Colon>:</Colon>NP069942</SubLine>
            <SubLine><SubKey $w={86}>Section</SubKey><Colon>:</Colon>A6</SubLine>
          </SubBlock>
        </PageOne>
        <PageTwo>
          <Running>Complete Installation Guide of Rocky Linux</Running>
          <TocHead>Table of Contents<Caret /></TocHead>
          <Toc t="Installation Guide of Rocky Linux " n="3" h={28} bold />
          {STEPS.map(([t, n]) => <Toc key={t} t={t} n={n} h={28} indent />)}
          <FigBlock>
            {FIGS.map(([t, n]) => <Toc key={t} t={t} n={n} h={21.3} />)}
          </FigBlock>
        </PageTwo>
        <ScrollCol>
          <ScrollArrow><S w={9} h={6} c="none"><path d="M4.500 0L9 6H0z" fill="#999" /></S></ScrollArrow>
          <ScrollTrack><ScrollThumb /></ScrollTrack>
          <ScrollArrow><S w={9} h={6} c="none"><path d="M4.500 6L9 0H0z" fill="#999" /></S></ScrollArrow>
        </ScrollCol>
      </Doc>
      <Status>
        <Cell $left $w={63}>Page 2 of 15</Cell>
        <Cell $left $w={53} $ml={19}>668 words</Cell>
        <Cell $w={14} $ml={19}><S w={14} h={15} c="#ddd"><path d="M5 .5H.5v11h5V.5l4 1v5M6 9l7 5.500M13 9l-7 5.500" /></S></Cell>
        <Cell $left $w={101} $ml={20}>Text Predictions: On</Cell>
        <Cell $w={14} $ml={20}><S w={14} h={15} c="#ddd"><circle cx="6" cy="2.500" r="2" /><path d="M1 5l5 1.500L11 5M6 6.500V10l-3 4M6 10l3 4M8 11l5 3M13 10l-5 4" /></S></Cell>
        <Cell $left $w={126} $ml={4}><StatusBold>Accessibility: Investigate</StatusBold></Cell>
        <StatusRight>
          <Cell $w={14}><S w={14} h={15} c="#ddd"><path d="M.5 4V.5H3M11 .5h2.500V4M.5 11v3.500H3M11 14.500h2.500V11M4 12V3h4l2.500 2.500V12zM8 3v3h2.500" /></S></Cell>
          <Cell $left $w={29} $ml={4}>Focus</Cell>
          <Cell $w={13} $ml={25}><S w={13} h={12} c="#ddd"><path d="M.5.5h5.500l.5 1 .5-1h5.500v10.500H.5zM6.500 1.500V11M2 3.500h3M2 5.500h3M2 7.500h3M8 3.500h3M8 5.500h3M8 7.500h3" /></S></Cell>
          <ViewActive><S w={11} h={13} c="#eee"><path d="M.5.5h10v12H.5zM2.500 3.500h6M2.500 5.500h6M2.500 7.500h6M2.500 9.500h6" /></S></ViewActive>
          <Cell $w={13} $ml={13}><S w={13} h={13} c="#ddd"><path d="M.5.5h10v4M5 12.500H.5V.5M2.500 3h6M2.500 5h5M2.500 7h3" /><circle cx="9" cy="9" r="3.800" fill="#ddd" /></S></Cell>
          <Cell $w={8} $ml={20}><S w={8} h={2} c="#ddd"><path d="M0 1h8" /></S></Cell>
          <Slider><SliderThumb /></Slider>
          <Cell $w={8} $ml={5}><S w={8} h={8} c="#ddd"><path d="M0 4h8M4 0v8" /></S></Cell>
          <Cell $left $w={26} $ml={14}>100%</Cell>
        </StatusRight>
      </Status>
    </Shell>
  );
}
